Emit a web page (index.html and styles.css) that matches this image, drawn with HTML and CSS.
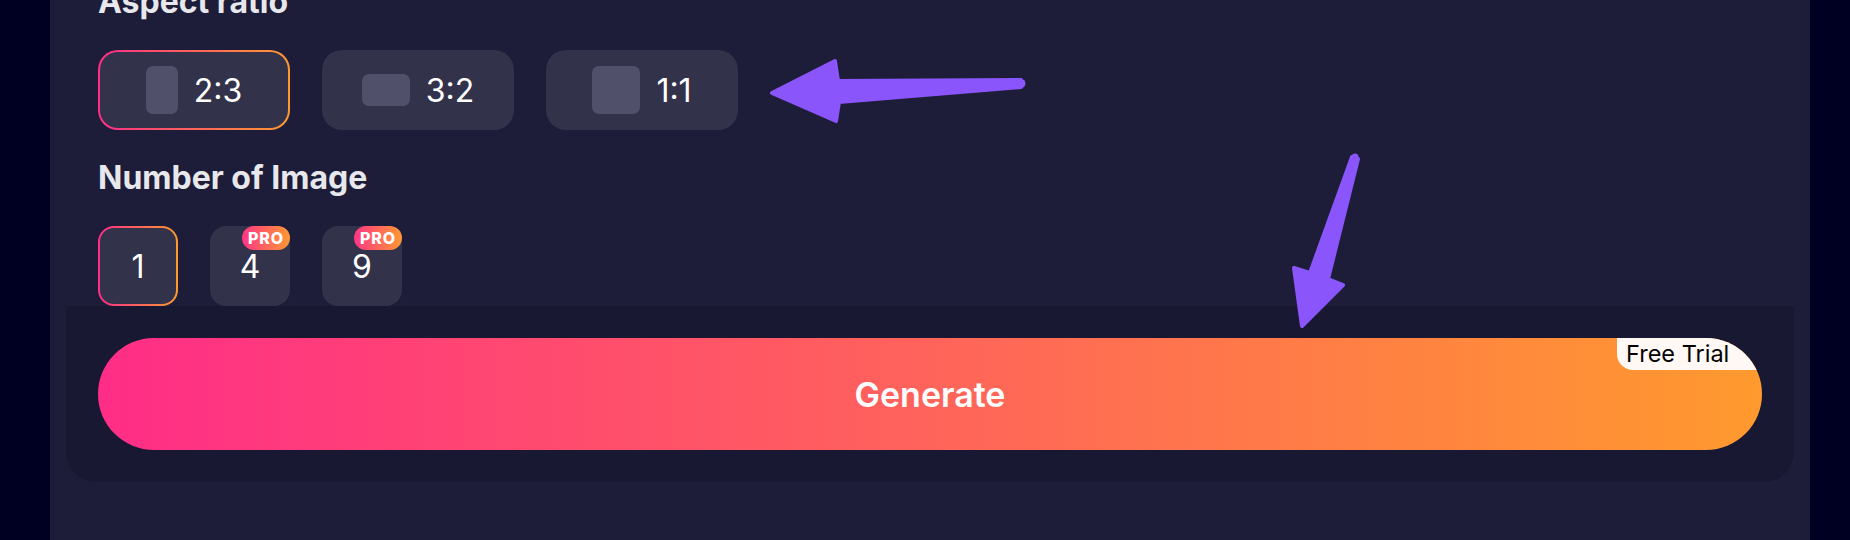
FILE: index.html
```html
<!DOCTYPE html>
<html lang="en">
<head>
<meta charset="utf-8">
<title>Generate</title>
<link rel="stylesheet" href="styles.css">
</head>
<body>
<div class="panel">
  <h2 class="label">Aspect ratio</h2>
  <div class="options">
    <button class="ratio selected"><span class="shape s23"></span><span class="val">2:3</span></button>
    <button class="ratio"><span class="shape s32"></span><span class="val">3:2</span></button>
    <button class="ratio"><span class="shape s11"></span><span class="val">1:1</span></button>
  </div>
  <h2 class="label">Number of Image</h2>
  <div class="options options-last">
    <button class="count selected">1</button>
    <button class="count">4<span class="pro">PRO</span></button>
    <button class="count">9<span class="pro">PRO</span></button>
  </div>
  <div class="footer">
    <button class="generate">Generate<span class="trial">Free Trial</span></button>
  </div>
</div>
<svg class="annot" width="1850" height="540" viewBox="0 0 1850 540">
  <path d="M1021 80 L838 81 L835 61 L772 93 L836 121 L839 102 L1021 87 Z" fill="#8a55fb" stroke="#8a55fb" stroke-width="4" stroke-linejoin="round"/>
  <circle cx="1021" cy="83.5" r="4.5" fill="#8a55fb"/>
  <path d="M1352 157 L1310 273 L1294 268 L1302 326 L1343 285 L1328 279 L1358 159 Z" fill="#8a55fb" stroke="#8a55fb" stroke-width="4" stroke-linejoin="round"/>
  <circle cx="1355" cy="157" r="3.5" fill="#8a55fb"/>
</svg>
</body>
</html>
```
FILE: styles.css
```css
html, body {
  margin: 0;
  padding: 0;
}
body {
  width: 1850px;
  height: 540px;
  overflow: hidden;
  background: #000022;
  font-family: Inter, "Noto Sans", sans-serif;
  position: relative;
}
.panel {
  display: flex;
  flex-direction: column;
  margin-left: 50px;
  margin-top: -18px;
  width: 1760px;
  height: 558px;
  box-sizing: border-box;
  padding: 0 48px;
  background: #1d1d3a;
}
.label {
  margin: 0;
  font-size: 32px;
  line-height: 40px;
  font-weight: 700;
  color: #e8e8ec;
}
.options {
  display: flex;
  gap: 32px;
  margin: 28px 0;
}
.options-last {
  margin-bottom: 0;
}
.ratio, .count {
  box-sizing: border-box;
  height: 80px;
  border: 2px solid transparent;
  background: #32324a;
  color: #ffffff;
  font-family: Inter, "Noto Sans", sans-serif;
  font-size: 32px;
  font-weight: 400;
  padding: 0;
  display: flex;
  align-items: center;
  justify-content: center;
  position: relative;
}
.ratio {
  width: 192px;
  border-radius: 20px;
  gap: 16px;
}
.count {
  width: 80px;
  border-radius: 16px;
}
.selected {
  background: linear-gradient(#32324a, #32324a) padding-box, linear-gradient(90deg, #ff2d87, #ff9a2e) border-box;
}
.shape {
  display: block;
  background: #50506a;
  border-radius: 7px;
}
.s23 { width: 32px; height: 48px; }
.s32 { width: 48px; height: 32px; }
.s11 { width: 48px; height: 48px; }
.pro {
  position: absolute;
  top: -2px;
  right: -2px;
  width: 48px;
  height: 24px;
  border-radius: 12px;
  background: linear-gradient(90deg, #ff3584, #ff9833);
  color: #fff;
  font-size: 16px;
  font-weight: 800;
  line-height: 24px;
  letter-spacing: 0.8px;
  text-align: center;
}
.footer {
  margin: 0 -32px;
  padding: 32px;
  background: #181833;
  border-radius: 0 0 30px 30px;
}
.generate {
  display: block;
  width: 100%;
  height: 112px;
  border: none;
  border-radius: 56px;
  overflow: hidden;
  position: relative;
  background: linear-gradient(90deg, #ff2d87 0%, #ff9a2e 100%);
  color: #fff;
  font-family: Inter, "Noto Sans", sans-serif;
  font-size: 34px;
  font-weight: 600;
  padding: 0;
}
.trial {
  position: absolute;
  top: 0;
  right: 0;
  width: 145px;
  height: 32px;
  box-sizing: border-box;
  padding-left: 9px;
  background: #fff8f4;
  border-bottom-left-radius: 16px;
  color: #000;
  font-size: 23.5px;
  font-weight: 400;
  line-height: 32px;
  text-align: left;
}
.annot {
  position: absolute;
  top: 0;
  left: 0;
  pointer-events: none;
}
```
